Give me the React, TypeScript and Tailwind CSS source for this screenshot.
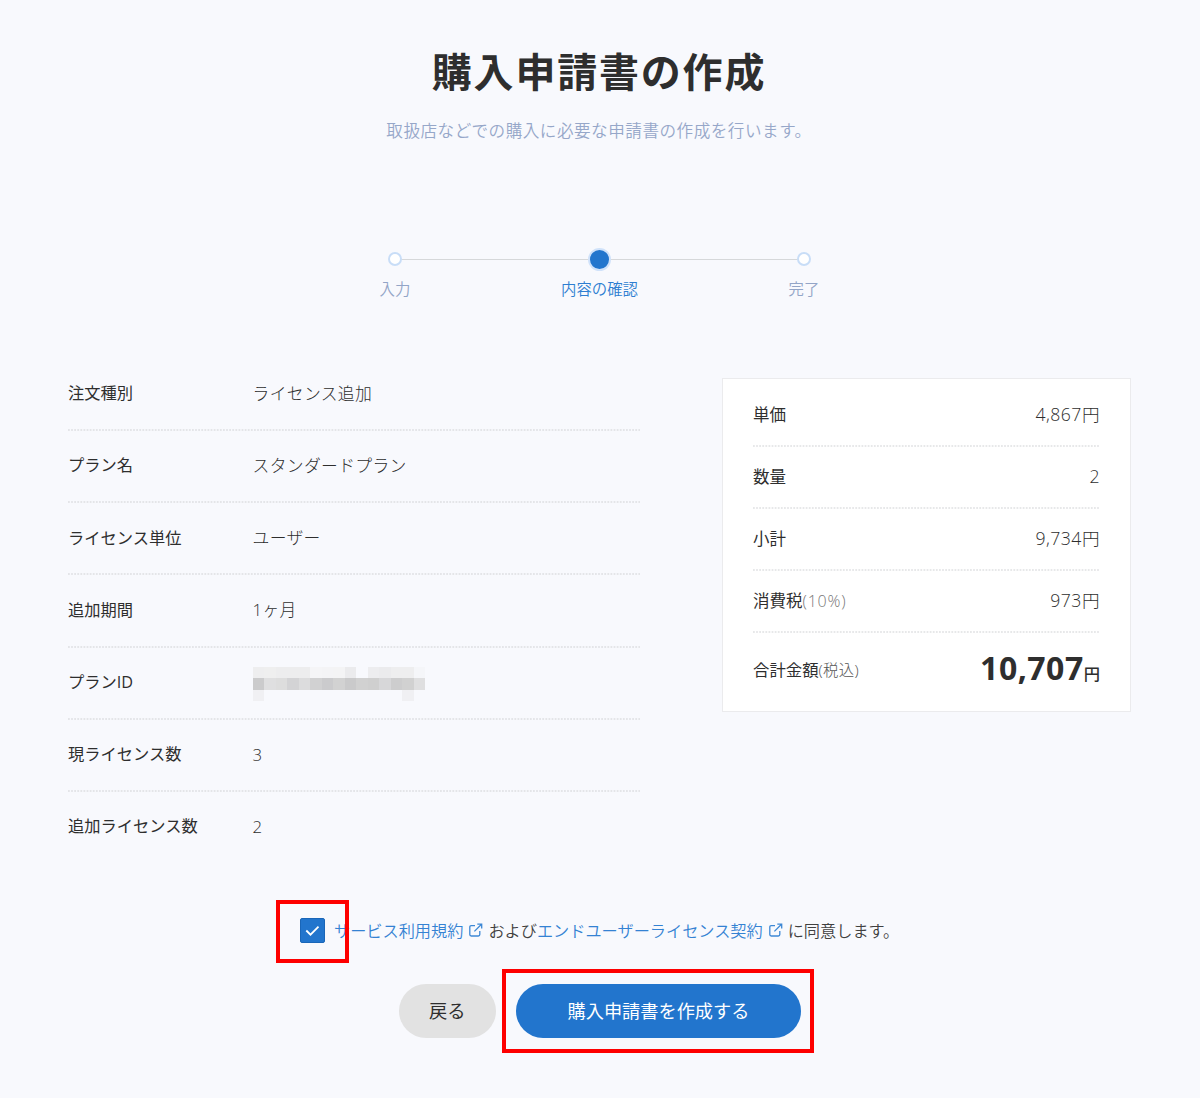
import type { ReactNode } from "react";

const STEPS = [
  { label: "入力", active: false },
  { label: "内容の確認", active: true },
  { label: "完了", active: false },
];

// Masked plan ID, one entry per block
const MASK_ROWS = [
  ["#eeeeef", "#efefef", "#ededee", "#ededee", "#ededee", "#f5f5f7", "#f4f4f6", "#f4f4f5", "#ebebed", "#f8f9fd", "#ededef", "#ebebed", "#eeeeef", "#eeeeef", "#f5f6f9"],
  ["#cbcbcc", "#dfdfe0", "#dddddd", "#d3d3d5", "#dcdcdd", "#d1d1d2", "#cbcbcd", "#d2d2d2", "#cacacb", "#d1d1d1", "#cfcfcf", "#d7d7d9", "#cdcdce", "#d1d1d1", "#dfdfe0"],
  ["#f0f0f3", "", "", "", "", "", "", "", "", "", "", "", "", "#f0f0f3", ""],
];

function MaskedValue() {
  return (
    <div className="mt-[4px] flex flex-col">
      {MASK_ROWS.map((row, i) => (
        <div key={i} className="flex h-[11.4px]">
          {row.map((color, j) => (
            <span key={j} className="w-[11.5px]" style={{ backgroundColor: color || undefined }} />
          ))}
        </div>
      ))}
    </div>
  );
}

const DETAILS: { label: string; value: ReactNode }[] = [
  { label: "注文種別", value: "ライセンス追加" },
  { label: "プラン名", value: "スタンダードプラン" },
  { label: "ライセンス単位", value: "ユーザー" },
  { label: "追加期間", value: "1ヶ月" },
  { label: "プランID", value: <MaskedValue /> },
  { label: "現ライセンス数", value: "3" },
  { label: "追加ライセンス数", value: "2" },
];

const PRICES = [
  { label: "単価", note: "", value: "4,867円" },
  { label: "数量", note: "", value: "2" },
  { label: "小計", note: "", value: "9,734円" },
  { label: "消費税", note: "(10%)", value: "973円" },
];

function DottedLine() {
  return (
    <svg className="block h-[2px] w-full" aria-hidden="true">
      <line x1="0" y1="1" x2="100%" y2="1" stroke="#d0d1d4" strokeWidth="1.2" strokeDasharray="1.8 1.3" />
    </svg>
  );
}

function ExternalIcon() {
  return (
    <svg
      className="mx-[5px] inline-block size-[15px] align-[-1px]"
      viewBox="0 0 15 15"
      fill="none"
      stroke="#3d88d5"
      strokeWidth="1.3"
    >
      <path d="M7 2.6H3.2Q1.8 2.6 1.8 4v7.6q0 1.4 1.4 1.4h7.2q1.4 0 1.4-1.4V8" />
      <path d="M9.3 1.1h4.4v4.5M13.5 1.3L6.4 8.4" />
    </svg>
  );
}

function Stepper() {
  return (
    <div className="relative mt-[102px] ml-[356px] flex w-[487px] justify-between">
      <div className="absolute top-[14px] right-[38px] left-[38px] h-px bg-[#d6d8da]" />
      {STEPS.map((step) => (
        <div key={step.label} className="relative flex w-[78px] flex-col items-center">
          <div className="flex h-7 items-center">
            {step.active ? (
              <span className="size-[23px] rounded-full border-2 border-[#d0e2fa] bg-[#2275cd]" />
            ) : (
              <span className="size-[14px] rounded-full border-2 border-[#c8ddf7] bg-white" />
            )}
          </div>
          <span
            className={`mt-[5px] text-[15.4px] leading-6 font-[350] whitespace-nowrap ${
              step.active ? "text-[#2e7ed1]" : "text-[#93a5c7]"
            }`}
          >
            {step.label}
          </span>
        </div>
      ))}
    </div>
  );
}

export default function App() {
  return (
    <main className="h-[1098px] w-[1200px] overflow-hidden bg-[#f8f9fd] font-['Open_Sans','Noto_Sans_CJK_JP',sans-serif] text-[#2e2e2e]">
      <header className="pt-[45px] pr-[2px] text-center">
        <h1 className="text-[40px] leading-[54px] font-bold tracking-[1.8px]">購入申請書の作成</h1>
        <p className="mt-[20px] text-[16.6px] leading-6 font-[350] tracking-[0.5px] text-[#96a7c9]">
          取扱店などでの購入に必要な申請書の作成を行います。
        </p>
      </header>

      <Stepper />

      <div className="mx-[68px] mt-[56px] flex items-start justify-between">
        {/* Order details */}
        <dl className="w-[572px]">
          {DETAILS.map((item, i) => (
            <div key={item.label}>
              <div className={`flex items-center ${i === 0 ? "h-[71px]" : "h-[70.2px] pb-[1px]"}`}>
                <dt className="w-[184.5px] text-[16.25px] font-normal">{item.label}</dt>
                <dd className="text-[16.8px] font-light tracking-[0.35px]">{item.value}</dd>
              </div>
              {i < DETAILS.length - 1 && <DottedLine />}
            </div>
          ))}
        </dl>

        {/* Price summary */}
        <dl className="mt-[20px] mr-[1px] h-[334px] w-[409px] border border-[#ebebed] bg-white px-[30px] pt-[6px]">
          {PRICES.map((item) => (
            <div key={item.label}>
              <div className="flex h-[60px] items-center justify-between pb-[1px]">
                <dt className="pt-px text-[16.5px]">
                  {item.label}
                  <span className="text-[16px] font-light tracking-[0.8px] text-[#777]">{item.note}</span>
                </dt>
                <dd className="pb-px text-[17.6px] font-light tracking-[0.5px]">{item.value}</dd>
              </div>
              <DottedLine />
            </div>
          ))}
          <div className="flex h-[74px] items-center justify-between">
            <dt className="text-[16.4px]">
              合計金額<span className="text-[15.4px] font-light tracking-[0.3px] text-[#555]">(税込)</span>
            </dt>
            <dd className="pb-[4px] text-[32px] font-bold">
              <span className="tracking-[0.5px]">10,707</span>
              <span className="text-[16.3px] font-medium">円</span>
            </dd>
          </div>
        </dl>
      </div>

      {/* Agreement */}
      <div className="mt-[38px] ml-[276px] flex h-[63px] items-center">
        <div className="relative flex h-[63px] w-[58px] shrink-0 items-center pb-[3px] pl-6">
          <span className="flex size-[25px] items-center justify-center rounded-[2px] border border-[#1a66b8] bg-[#2275cd]">
            <svg className="size-[15px]" viewBox="0 0 15 15" fill="none" stroke="#fff" strokeWidth="1.8">
              <path d="M1.3 7.5l4.2 4.2 8-8" />
            </svg>
          </span>
          <span className="absolute top-0 left-0 z-10 h-[63px] w-[73px] border-4 border-[#fe0000]" />
        </div>
        <p className="pb-px text-[16.18px] font-[350] whitespace-nowrap text-[#404040]">
          <a className="text-[#3482d3]">サービス利用規約</a>
          <ExternalIcon />
          および<a className="text-[#3482d3]">エンドユーザーライセンス契約</a>
          <ExternalIcon />
          に同意します。
        </p>
      </div>

      {/* Actions */}
      <div className="mt-[6px] ml-[398.5px] flex items-center gap-[6px]">
        <button className="h-[54px] w-[97.5px] rounded-full bg-[#e2e2e2] text-[18.3px]">戻る</button>
        <div className="border-4 border-[#fe0000] pt-[11px] pr-[9px] pb-[11px] pl-[10px]">
          <button className="block h-[54px] w-[285px] rounded-full bg-[#2275cd] pt-px text-[18.2px] text-white">
            購入申請書を作成する
          </button>
        </div>
      </div>
    </main>
  );
}
